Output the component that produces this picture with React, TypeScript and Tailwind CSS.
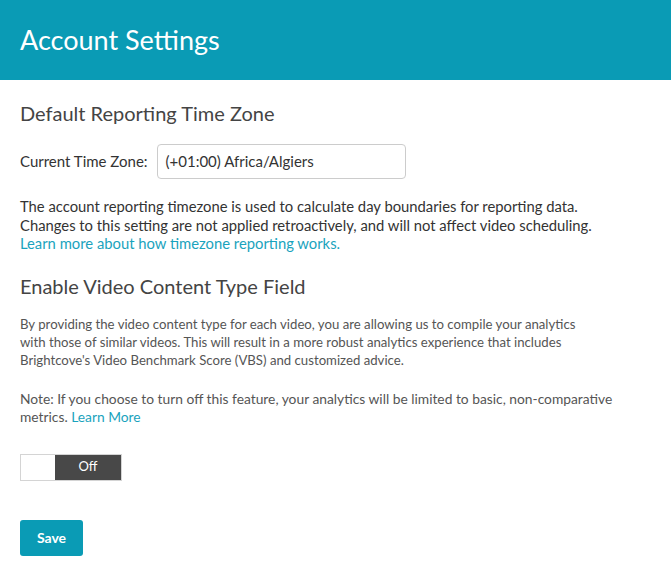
export default function App() {
  return (
    <div className="min-h-[566px] bg-white font-['Lato','Noto_Sans',sans-serif] text-[#333]">
      {/* Header */}
      <div className="flex h-[80px] items-center bg-[#0a9bb5] px-5">
        <h1 className="text-[27px] font-normal text-white">Account Settings</h1>
      </div>

      <div className="px-5">
        {/* Time zone */}
        <h2 className="mt-[21px] text-[20px] leading-6 text-[#444]">Default Reporting Time Zone</h2>
        <div className="mt-[19px] flex items-center gap-[9px] text-[15px]">
          <label>Current Time Zone:</label>
          <div className="flex h-[35px] w-[249px] items-center rounded border border-[#ccc] px-2">
            (+01:00) Africa/Algiers
          </div>
        </div>
        <p className="mt-[18px] text-[14.8px] leading-[18.5px]">
          The account reporting timezone is used to calculate day boundaries for reporting data.
          <br />
          Changes to this setting are not applied retroactively, and will not affect video scheduling.
          <br />
          <a className="text-[#1aa3bd]">Learn more about how timezone reporting works.</a>
        </p>

        {/* Content type */}
        <h2 className="mt-[21px] text-[20px] leading-6 text-[#444]">Enable Video Content Type Field</h2>
        <p className="mt-[17px] text-[13.2px] leading-[18px] text-[#555]">
          By providing the video content type for each video, you are allowing us to compile your analytics
          <br />
          with those of similar videos. This will result in a more robust analytics experience that includes
          <br />
          Brightcove's Video Benchmark Score (VBS) and customized advice.
        </p>
        <p className="mt-[21px] text-[13.8px] leading-[18px] text-[#555]">
          Note: If you choose to turn off this feature, your analytics will be limited to basic, non-comparative
          <br />
          metrics. <a className="text-[#1aa3bd]">Learn More</a>
        </p>

        {/* Toggle */}
        <div className="mt-[28px] flex h-[27px] w-[102px] border border-[#d4d4d4]">
          <div className="w-[34px] bg-white" />
          <div className="flex flex-1 items-center justify-center bg-[#484848] text-[13px] text-white">Off</div>
        </div>

        <button className="mt-[39px] h-[36px] w-[63px] rounded-[3px] bg-[#0a9bb5] text-sm font-bold text-white">
          Save
        </button>
      </div>
    </div>
  );
}
